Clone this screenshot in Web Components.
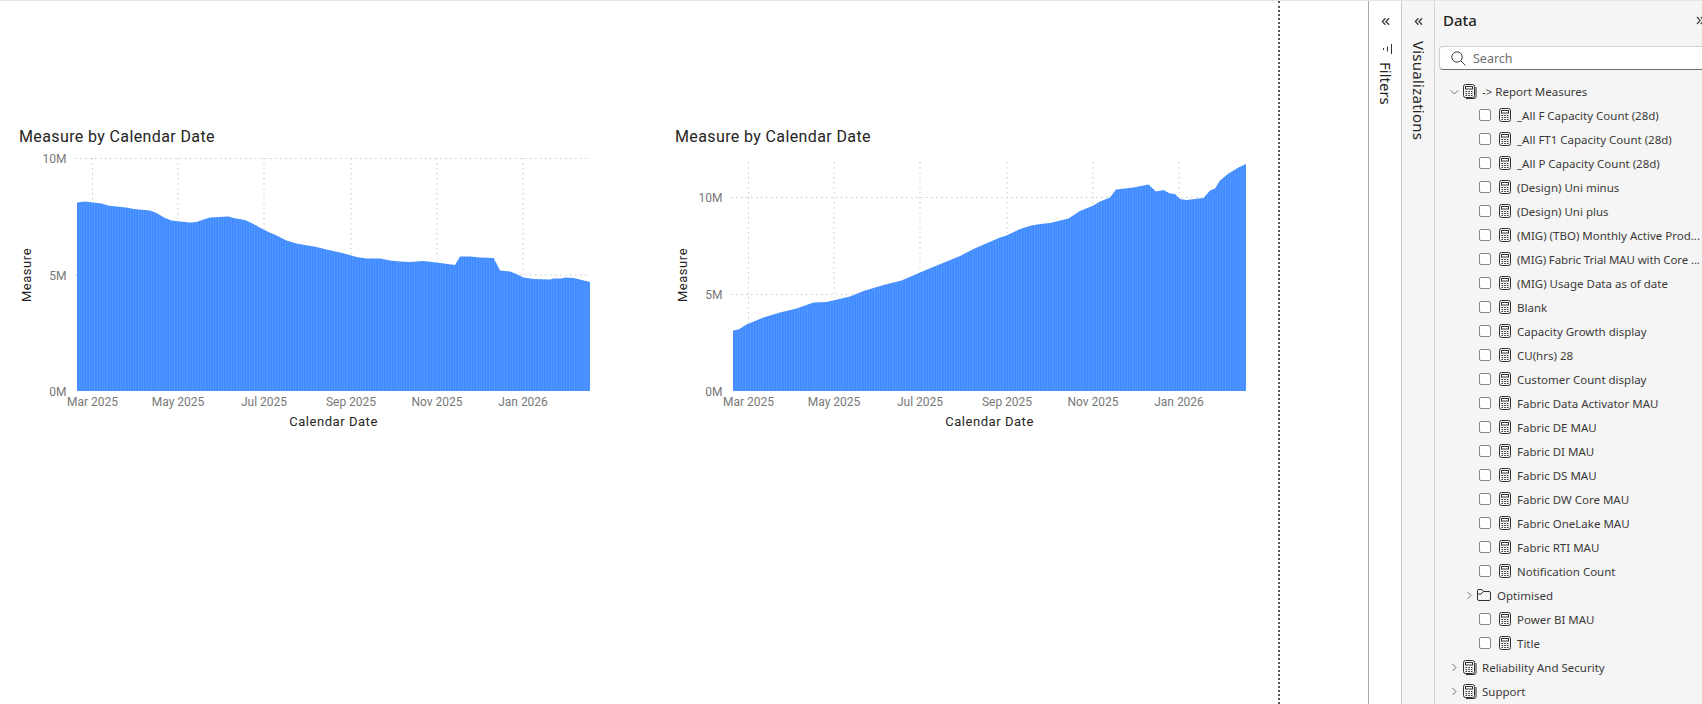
<!DOCTYPE html>
<html lang="en">
<head>
<meta charset="utf-8">
<title>Report</title>
<style>
    html, body { margin: 0; height: 100%; overflow: hidden; background: #fff; }
</style>
</head>
<body>
<report-shell>
    <report-canvas slot="canvas">
        <area-chart series="decline" y-ticks="10M:158.5,5M:275,0M:391" grid-top="158"></area-chart>
        <area-chart series="growth" y-ticks="10M:197.5,5M:294.5,0M:391" grid-top="162"></area-chart>
    </report-canvas>
    <side-rail slot="rails" label="Filters" icon></side-rail>
    <side-rail slot="rails" label="Visualizations" shaded></side-rail>
    <data-pane slot="pane">
        <field-row kind="table" open>-&gt; Report Measures</field-row>
        <field-row>_All F Capacity Count (28d)</field-row>
        <field-row>_All FT1 Capacity Count (28d)</field-row>
        <field-row>_All P Capacity Count (28d)</field-row>
        <field-row>(Design) Uni minus</field-row>
        <field-row>(Design) Uni plus</field-row>
        <field-row>(MIG) (TBO) Monthly Active Prod...</field-row>
        <field-row style="letter-spacing: -0.12px">(MIG) Fabric Trial MAU with Core ...</field-row>
        <field-row>(MIG) Usage Data as of date</field-row>
        <field-row>Blank</field-row>
        <field-row>Capacity Growth display</field-row>
        <field-row>CU(hrs) 28</field-row>
        <field-row>Customer Count display</field-row>
        <field-row>Fabric Data Activator MAU</field-row>
        <field-row>Fabric DE MAU</field-row>
        <field-row>Fabric DI MAU</field-row>
        <field-row>Fabric DS MAU</field-row>
        <field-row>Fabric DW Core MAU</field-row>
        <field-row>Fabric OneLake MAU</field-row>
        <field-row>Fabric RTI MAU</field-row>
        <field-row>Notification Count</field-row>
        <field-row kind="folder">Optimised</field-row>
        <field-row>Power BI MAU</field-row>
        <field-row>Title</field-row>
        <field-row kind="table">Reliability And Security</field-row>
        <field-row kind="table">Support</field-row>
    </data-pane>
</report-shell>

<script>
// Outline of each area, read off the reference in page coordinates
const SERIES = {
    decline: [
        [77,202.5],[85,201.5],[93.5,202.5],[101.5,203.5],[108,205.5],[116.5,206.5],[126.5,207.5],[133.5,209],
        [150,210.5],[156.5,213],[165,218],[171.5,220.5],[180,221.5],[190,222.5],[196.5,222],[203.5,219.5],
        [210,217.5],[228.5,216.5],[233.5,218],[245,220],[253.5,224],[261.5,228.5],[268.5,232],[276.5,235.5],
        [286.5,240.5],[296.5,243.5],[316.5,247],[326.5,249.5],[340,252.5],[350,255],[356.5,257],[366.5,258.5],
        [380,258.5],[390,260.5],[400,261.5],[410,262],[423.5,261],[436.5,262.5],[455,265],[460,256.5],
        [470,256.5],[480,257.5],[493.5,258],[496.5,263.5],[500,270.5],[510,271.5],[516.5,274],[523.5,277.5],
        [533.5,279],[550,279.5],[553.5,278.5],[561.5,278.5],[565,277.5],[573.5,278],[590,282]
    ],
    growth: [
        [733,330.5],[738.5,329.5],[746.5,324.5],[763.5,317.5],[780,312.5],[796.5,308.5],[813.5,302.5],[826.5,302],
        [850,296.5],[863.5,291],[883.5,285],[901.5,280.5],[923.5,271],[960,256],[973.5,249],[1000,237.5],
        [1006.5,235.5],[1020,229],[1031.5,225.5],[1040,224],[1050,223],[1068.5,218.5],[1080,211],[1093.5,205.5],
        [1100,201.5],[1110,197.5],[1116,189.5],[1133.5,187.5],[1148.5,184.5],[1156,191.5],[1163.5,190],[1170,193.5],
        [1175,194],[1180,199],[1186.5,200],[1203.5,198],[1210,190.5],[1215,188.5],[1220,180.5],[1228.5,173.5],
        [1238.5,167.5],[1246,164]
    ]
};

const PLOT_BASE = 391;

class ReportShell extends HTMLElement {
    constructor() {
        super();
        this.attachShadow({ mode: 'open' });
        this.shadowRoot.innerHTML = `
            <style>
                :host {
                    display: flex;
                    height: 704px;
                    width: 1702px;
                    box-sizing: border-box;
                    border-top: 1px solid #e6e6e6;
                    overflow: hidden;
                    background: #fff;
                }
                .stage { flex: 0 0 1368px; }
                .rails { display: flex; flex: none; }
            </style>
            <div class="stage"><slot name="canvas"></slot></div>
            <div class="rails"><slot name="rails"></slot></div>
            <slot name="pane"></slot>
        `;
    }
}

class ReportCanvas extends HTMLElement {
    constructor() {
        super();
        this.attachShadow({ mode: 'open' });
        this.shadowRoot.innerHTML = `
            <style>
                :host {
                    display: flex;
                    gap: 56px;
                    box-sizing: border-box;
                    width: 1280px;
                    height: 703px;
                    padding: 123px 0 0 8px;
                    border-right: 2px dotted #555;
                }
            </style>
            <slot></slot>
        `;
    }
}

class AreaChart extends HTMLElement {
    constructor() {
        super();
        this.attachShadow({ mode: 'open' });
    }

    connectedCallback() { this.render(); }

    render() {
        const points = SERIES[this.getAttribute('series')];
        // Everything below is in the first chart's page space; the svg viewBox does the shift
        const shift = points[0][0] > 600 ? 656 : 0;
        const outline = points.map(([x, y]) => `${x - shift},${y}`).join(' ');
        const first = points[0][0] - shift;
        const last = points[points.length - 1][0] - shift;
        const gridTop = this.getAttribute('grid-top');

        const ticks = this.getAttribute('y-ticks').split(',').map(t => t.split(':'));
        const months = [[92.5, 'Mar 2025'], [178, 'May 2025'], [264, 'Jul 2025'], [351, 'Sep 2025'], [437, 'Nov 2025'], [523, 'Jan 2026']];

        const hGrid = ticks.filter(([label]) => label !== '0M').map(([, y]) =>
            `<line class="grid" x1="75" x2="588" y1="${y}" y2="${y}"></line>`).join('');
        const vGrid = months.map(([x]) =>
            `<line class="grid" x1="${x}" x2="${x}" y1="${gridTop}" y2="${PLOT_BASE}"></line>`).join('');
        const yLabels = ticks.map(([label, y]) =>
            `<text class="tick" x="66.5" y="${+y + 4.5}" text-anchor="end">${label}</text>`).join('');
        const xLabels = months.map(([x, label]) =>
            `<text class="tick" x="${x}" y="406" text-anchor="middle">${label}</text>`).join('');

        const id = 'fill-' + this.getAttribute('series');

        this.shadowRoot.innerHTML = `
            <style>
                :host { display: block; flex: none; width: 600px; font-family: Roboto, "Liberation Sans", sans-serif; }
                .title {
                    height: 26px;
                    line-height: 26px;
                    padding-left: 11px;
                    font-size: 16px;
                    letter-spacing: 0.38px;
                    color: #252423;
                }
                svg { display: block; }
                .grid { stroke: #c9c9c9; stroke-width: 1; stroke-dasharray: 1.5 3.5; }
                .tick { font-size: 12px; fill: #777; }
                .axis { font-size: 13px; fill: #252423; letter-spacing: 0.55px; }
            </style>
            <div class="title">Measure by Calendar Date</div>
            <svg width="600" height="290" viewBox="8 150 600 290">
                <defs>
                    <pattern id="${id}" width="2.58" height="10" patternUnits="userSpaceOnUse" x="${first}">
                        <rect width="2.58" height="10" fill="#3f8bff"></rect>
                        <rect x="1.7" width="0.88" height="10" fill="#5799ff"></rect>
                    </pattern>
                </defs>
                ${hGrid}${vGrid}
                <polygon points="${first},${PLOT_BASE} ${outline} ${last},${PLOT_BASE}" fill="url(#${id})"></polygon>
                ${yLabels}${xLabels}
                <text class="axis" x="333.5" y="426" text-anchor="middle">Calendar Date</text>
                <text class="axis" transform="translate(31 275) rotate(-90)" text-anchor="middle">Measure</text>
            </svg>
        `;
    }
}

class SideRail extends HTMLElement {
    constructor() {
        super();
        this.attachShadow({ mode: 'open' });
    }

    connectedCallback() {
        const icon = this.hasAttribute('icon')
            ? `<svg class="filter" width="11" height="10" viewBox="0 0 11 10" fill="none" stroke="#333" stroke-width="1">
                   <path d="M9.5 0v10M5.5 2.5v5M1.5 4v2"></path>
               </svg>`
            : '';
        this.shadowRoot.innerHTML = `
            <style>
                :host {
                    display: flex;
                    flex-direction: column;
                    align-items: center;
                    box-sizing: border-box;
                    width: 33px;
                    height: 703px;
                    padding-top: 16px;
                    border-left: 1px solid #c8c8c8;
                    background: ${this.hasAttribute('shaded') ? '#f5f5f5' : '#fff'};
                    font-family: "Noto Sans", "Open Sans", sans-serif;
                }
                :host([icon]) { border-left-color: #a8a8a8; }
                .chev { display: block; }
                .filter { margin: 18px 0 0 5px; }
                .label {
                    writing-mode: vertical-rl;
                    font-size: 15px;
                    line-height: 15px;
                    letter-spacing: 0.25px;
                    color: #252423;
                    margin-top: 15px;
                }
                :host([icon]) .label { margin-top: 8px; letter-spacing: 0; }
            </style>
            <svg class="chev" width="9" height="9" viewBox="0 0 9 9" fill="none" stroke="#444" stroke-width="1.4">
                <path d="M4.4 1.2 1.4 4.5l3 3.3M8 1.2 5 4.5l3 3.3"></path>
            </svg>
            ${icon}
            <div class="label">${this.getAttribute('label')}</div>
        `;
    }
}

class DataPane extends HTMLElement {
    constructor() {
        super();
        this.attachShadow({ mode: 'open' });
        this.shadowRoot.innerHTML = `
            <style>
                :host {
                    display: block;
                    flex: 0 0 268px;
                    box-sizing: border-box;
                    height: 703px;
                    overflow: hidden;
                    border-left: 1px solid #d4d4d4;
                    background: #f5f5f5;
                    font-family: "Noto Sans", "Open Sans", sans-serif;
                }
                header {
                    display: flex;
                    justify-content: space-between;
                    align-items: center;
                    height: 38px;
                    padding: 0 0 7px 8px;
                    box-sizing: content-box;
                    font-size: 15px;
                    font-weight: 500;
                    color: #252423;
                }
                header svg { margin-right: -3px; }
                .search {
                    display: flex;
                    align-items: center;
                    gap: 7px;
                    box-sizing: border-box;
                    width: 290px;
                    height: 24px;
                    margin-left: 4px;
                    padding-left: 11px;
                    background: #fff;
                    border: 1px solid #d1d1d1;
                    border-bottom-color: #707070;
                    border-radius: 4px;
                    font-size: 12.5px;
                    color: #707070;
                }
                .list { margin-top: 9px; }
            </style>
            <header>
                <span>Data</span>
                <svg width="9" height="9" viewBox="0 0 9 9" fill="none" stroke="#444" stroke-width="1.2">
                    <path d="M1 1l3.2 3.5L1 8M4.8 1 8 4.5 4.8 8"></path>
                </svg>
            </header>
            <div class="search">
                <svg width="15" height="15" viewBox="0 0 15 15" fill="none" stroke="#444" stroke-width="1">
                    <circle cx="6" cy="6" r="5.2"></circle>
                    <path d="M9.8 9.8 14.5 14.5"></path>
                </svg>
                <span>Search</span>
            </div>
            <div class="list"><slot></slot></div>
        `;
    }
}

class FieldRow extends HTMLElement {
    constructor() {
        super();
        this.attachShadow({ mode: 'open' });
    }

    connectedCallback() {
        const kind = this.getAttribute('kind') || 'measure';
        const calc = `
            <rect x="0.5" y="0.5" width="11" height="13" rx="2"></rect>
            <rect x="2.5" y="2.5" width="7" height="2.5" fill="#fff"></rect>
            <path d="M2.5 7.5h1.6M5.2 7.5h1.6M7.9 7.5h1.6M2.5 9.5h1.6M5.2 9.5h1.6M7.9 9.5h1.6M2.5 11.5h1.6M5.2 11.5h1.6M7.9 11.5h1.6" stroke-width="1.2"></path>`;

        const chevron = this.hasAttribute('open')
            ? '<path d="M1 3.5 4.5 7 8 3.5"></path>'
            : '<path d="M2.5 1 6 4.5 2.5 8"></path>';
        const chevronSvg = `<svg class="chev" width="9" height="9" viewBox="0 0 9 9" fill="none" stroke="#616161" stroke-width="0.9">${chevron}</svg>`;

        let lead;
        if (kind === 'table') {
            lead = `${chevronSvg}
                <svg class="icon" width="14" height="15" viewBox="0 0 14 15" fill="none" stroke="#333" stroke-width="1">
                    ${calc}
                    <path d="M13 3v9.5a2 2 0 0 1-2 2H3"></path>
                </svg>`;
        } else if (kind === 'folder') {
            lead = `${chevronSvg}
                <svg class="icon" width="15" height="12" viewBox="0 0 15 12" fill="none" stroke="#333" stroke-width="1">
                    <path d="M0.5 2a1.5 1.5 0 0 1 1.5-1.5h2.8L6.5 2.5H12A1.5 1.5 0 0 1 13.5 4v6a1.5 1.5 0 0 1-1.5 1.5H2A1.5 1.5 0 0 1 .5 10zM.5 5h3.5L6.5 2.5"></path>
                </svg>`;
        } else {
            lead = `<span class="check"></span>
                <svg class="icon" width="12" height="14" viewBox="0 0 12 14" fill="none" stroke="#333" stroke-width="1">${calc}</svg>`;
        }

        this.shadowRoot.innerHTML = `
            <style>
                :host {
                    display: flex;
                    align-items: center;
                    height: 24px;
                    white-space: nowrap;
                    font-size: 11.5px;
                    color: #3b3a39;
                }
                :host([kind="table"]) { padding-left: 15px; }
                :host([kind="folder"]) { padding-left: 30px; }
                :host(:not([kind])) { padding-left: 44px; }
                .chev { flex: none; margin-right: 4px; }
                :host([kind="folder"]) .chev { margin-right: 3px; }
                .check {
                    flex: none;
                    box-sizing: border-box;
                    width: 12px;
                    height: 12px;
                    margin-right: 8px;
                    background: #fff;
                    border: 1px solid #8a8886;
                    border-radius: 2px;
                }
                .icon { flex: none; margin-right: 5px; }
                :host(:not([kind])) .icon { margin-right: 6px; }
            </style>
            ${lead}<slot></slot>
        `;
    }
}

customElements.define('report-shell', ReportShell);
customElements.define('report-canvas', ReportCanvas);
customElements.define('area-chart', AreaChart);
customElements.define('side-rail', SideRail);
customElements.define('data-pane', DataPane);
customElements.define('field-row', FieldRow);
</script>
</body>
</html>
